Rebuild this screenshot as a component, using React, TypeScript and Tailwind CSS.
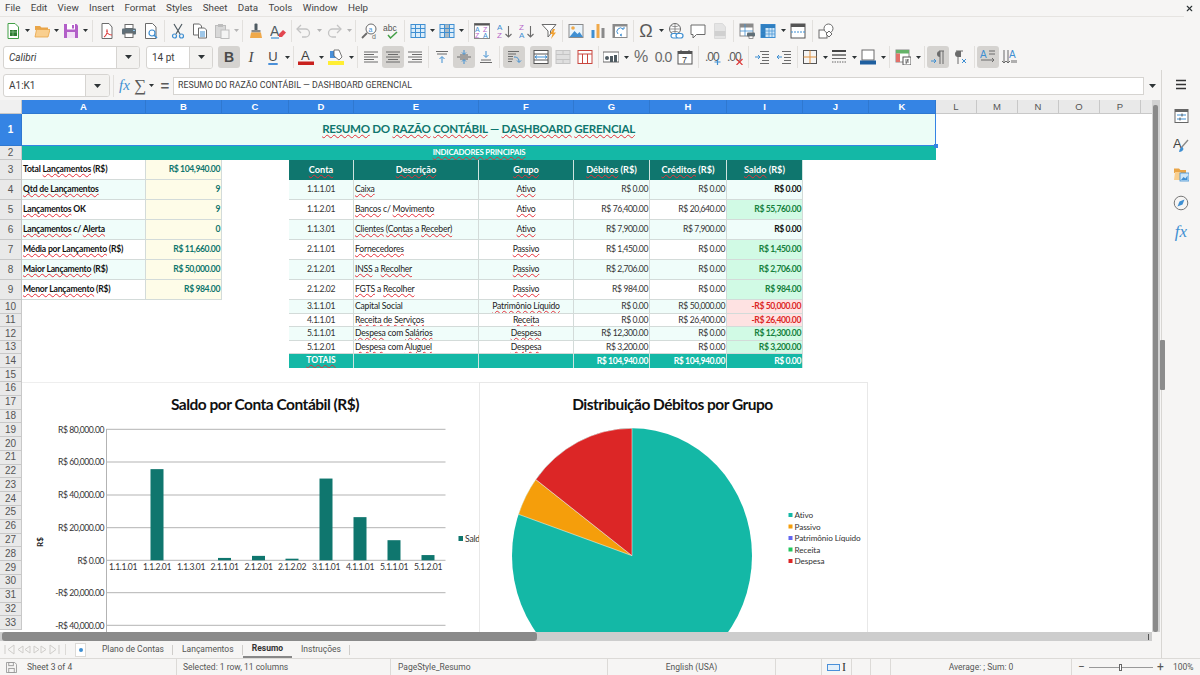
import type { ReactNode } from 'react';
import { Fragment } from 'react';
import { X } from 'lucide-react';

const cols = 'grid grid-cols-[22px_124px_76px_67px_65px_125px_95px_76px_77px_76px_66px_67px_41px_41px_41px_41px_41px_1fr]';
const uiFont = "font-['Roboto',sans-serif]";
const sheetFont = "font-['Lato',sans-serif]";

// text between | marks gets the spellcheck squiggle
function Spell({ text }: { text: string }) {
  return (
    <>
      {text.split('|').map((part, i) =>
        i % 2 === 1 ? (
          <span key={i} className="underline decoration-wavy decoration-[#e5303a] decoration-1 underline-offset-[0.5px]">
            {part}
          </span>
        ) : (
          <Fragment key={i}>{part}</Fragment>
        )
      )}
    </>
  );
}

function T({ children, on, className = '' }: { children: ReactNode; on?: boolean; className?: string }) {
  return (
    <div className={`flex h-[22px] w-[22px] shrink-0 items-center justify-center rounded-[3px] ${on ? 'bg-[#d5d3d0]' : ''} ${className}`}>
      {children}
    </div>
  );
}

function D({ className = 'w-[7px]', dim }: { className?: string; dim?: boolean }) {
  return (
    <div className={`flex shrink-0 items-center justify-center ${className}`}>
      <svg width="5" height="3" viewBox="0 0 5 3">
        <path d="M0 0h5L2.5 3z" fill={dim ? '#b5b5b5' : '#2e3436'} />
      </svg>
    </div>
  );
}

function S({ className = 'w-[5px]' }: { className?: string }) {
  return (
    <div className={`flex h-[22px] shrink-0 justify-center ${className}`}>
      <div className="h-full w-px bg-[#e2e0dd]" />
    </div>
  );
}

function Ic({ children }: { children: ReactNode }) {
  return (
    <svg viewBox="0 0 16 16" className="h-4 w-4" fill="none">
      {children}
    </svg>
  );
}

const grey = '#6b6b6b';
const blue = '#3f8fd2';

const I = {
  newDoc: <Ic><path d="M3 .5h7l3.5 3.5v11.5H3z" fill="#fff" stroke="#43a047" /><rect x="5" y="7" width="7" height="6" fill="#2e7d32" /><path d="M5 9h7M8 7v6" stroke="#a5d6a7" strokeWidth=".6" /></Ic>,
  open: <Ic><path d="M1 13V3h5l1.5 1.5H14V7H1z" fill="#e9a548" /><path d="M1 14 2.5 6.5H16L14 14z" fill="#f9cf8f" stroke="#e9a548" strokeWidth=".8" /></Ic>,
  save: <Ic><path d="M1 1h12.5L15 2.5V15H1z" fill="#b25ec8" /><rect x="4" y="1" width="8" height="5.5" fill="#fff" /><rect x="4" y="9" width="8" height="6" fill="#f2dff6" /><rect x="9" y="2" width="2" height="3.5" fill="#b25ec8" /></Ic>,
  pdf: <Ic><path d="M3 .5h7L13 4v11.5H3z" fill="#fff" stroke={grey} /><path d="M5 14c2-1 4-5 3-7-1 2 1 5 5 5" stroke="#dd3b3b" strokeWidth="1.1" /></Ic>,
  print: <Ic><rect x="4" y="1.5" width="8" height="4" fill="#fff" stroke={grey} /><rect x="1" y="5.5" width="14" height="6" rx="1" fill="#5f6f78" /><rect x="4" y="10" width="8" height="4.5" fill="#fff" stroke={grey} /><rect x="12" y="7" width="2" height="1" fill="#8ec5ea" /></Ic>,
  preview: <Ic><path d="M2.5.5h7L13 4v11.5H2.5z" fill="#fff" stroke={grey} /><circle cx="9" cy="10" r="3" stroke={blue} strokeWidth="1.2" /><path d="m11 12 3 3" stroke={blue} strokeWidth="1.5" /></Ic>,
  cut: <Ic><path d="M4 1l6 10M12 1 6 11" stroke="#4f5b62" strokeWidth="1.2" /><circle cx="4.5" cy="13" r="2" stroke={blue} strokeWidth="1.2" /><circle cx="11.5" cy="13" r="2" stroke={blue} strokeWidth="1.2" /></Ic>,
  copy: <Ic><path d="M1.5 1h6l2 2v9h-8z" fill="#fff" stroke={grey} /><path d="M6.5 5h6l2 2v8h-8z" fill="#fff" stroke={grey} /><path d="M8 9h5M8 11h5M8 13h5" stroke={blue} /></Ic>,
  paste: <Ic><rect x="1.5" y="2.5" width="10" height="12" fill="#d8d8d8" stroke="#bdbdbd" /><rect x="4" y="1" width="5" height="3" fill="#bdbdbd" /><rect x="7" y="7" width="8" height="8.5" fill="#f4f4f4" stroke="#bdbdbd" /></Ic>,
  brush: <Ic><rect x="6.5" y="0.5" width="3" height="7" rx="1" fill="#4f5b62" /><rect x="3.5" y="7" width="9" height="2.5" fill="#8a8a8a" /><path d="M3 9.5h10l1 5.500H2z" fill="#f0a94a" /></Ic>,
  clear: <Ic><text x="0" y="12.5" fontSize="14" fill="#4f5b62" fontFamily="Liberation Sans">A</text><path d="M1 15h8" stroke={blue} strokeWidth="1.2" /><path d="m9 11 4-4 3 2.5-4 4.5H9z" fill="#e2464f" /></Ic>,
  undo: <Ic><path d="M1 6h8.5a4 4 0 0 1 0 8H6" stroke="#c4c4c4" strokeWidth="1.3" /><path d="M5 2 1 6l4 4" stroke="#c4c4c4" strokeWidth="1.3" /></Ic>,
  redo: <Ic><path d="M15 6H6.5a4 4 0 0 0 0 8H10" stroke="#c4c4c4" strokeWidth="1.3" /><path d="m11 2 4 4-4 4" stroke="#c4c4c4" strokeWidth="1.3" /></Ic>,
  find: <Ic><circle cx="10" cy="6" r="5" fill="#fff" stroke={grey} /><path d="m6 10-5 5" stroke={grey} strokeWidth="1.8" /><text x="7.6" y="8.5" fontSize="7" fill={blue} fontFamily="Liberation Sans">a</text><text x="11" y="15.5" fontSize="7" fill={grey} fontFamily="Liberation Sans">d</text></Ic>,
  spell: <Ic><text x="0" y="8" fontSize="8.5" fill="#555" fontFamily="Liberation Sans">abc</text><path d="m5 12 2.5 3L14 9" stroke="#43a047" strokeWidth="1.5" /></Ic>,
  rows: <Ic><rect x="1" y="1.5" width="14" height="13" fill="#dcedf9" stroke={blue} /><path d="M1 5.5h14M1 9.5h14M5.5 1.5v13M10.5 1.5v13" stroke={blue} /></Ic>,
  columns: <Ic><rect x="1" y="1.5" width="14" height="13" fill="#dcedf9" stroke={blue} /><rect x="5.5" y="1.5" width="5" height="13" fill="#a9b9c4" /><path d="M1 5.5h14M1 9.5h14M5.5 1.5v13M10.5 1.5v13" stroke={blue} /></Ic>,
  sortBox: <Ic><rect x=".5" y=".5" width="15" height="15" fill="#fff" stroke="#8a8a8a" /><rect x=".5" y=".5" width="15" height="2" fill="#555" /><text x="1" y="9" fontSize="7" fill={blue} fontFamily="Liberation Sans">A</text><text x="1" y="15" fontSize="7" fill="#b565c8" fontFamily="Liberation Sans">Z</text><text x="9" y="9" fontSize="7" fill="#b565c8" fontFamily="Liberation Sans">Z</text><text x="9" y="15" fontSize="7" fill={blue} fontFamily="Liberation Sans">A</text></Ic>,
  asc: <Ic><text x="0" y="7" fontSize="8" fill={blue} fontFamily="Liberation Sans">A</text><text x="0" y="15" fontSize="8" fill="#b565c8" fontFamily="Liberation Sans">Z</text><path d="M11.5 3v11M8.5 11l3 3 3-3" stroke={grey} strokeWidth="1.1" /></Ic>,
  desc: <Ic><text x="0" y="7" fontSize="8" fill="#b565c8" fontFamily="Liberation Sans">Z</text><text x="0" y="15" fontSize="8" fill={blue} fontFamily="Liberation Sans">A</text><path d="M11.5 3v11M8.5 11l3 3 3-3" stroke={grey} strokeWidth="1.1" /></Ic>,
  filter: <Ic><path d="M1 1.5h14L9.5 8v3L7 14V8z" fill="#fff" stroke={grey} /><path d="M12 6 9 11h2.5L10 16l5-6.5h-2.5L14 6z" fill="#f0a030" /></Ic>,
  image: <Ic><rect x="1" y="1.5" width="14" height="13" fill="#eaf4fb" stroke="#8a8a8a" /><circle cx="5" cy="5" r="1.8" fill="#f0a94a" /><path d="M1.5 14l5-6 3 3 2-2 3.5 5z" fill={blue} /></Ic>,
  chart: <Ic><rect x="1.5" y="7" width="3" height="8" fill={blue} /><rect x="6.5" y="1" width="3" height="14" fill="#f0a94a" /><rect x="11.5" y="5" width="3" height="10" fill="#8a8a8a" /></Ic>,
  pivot: <Ic><rect x="1" y="1.5" width="14" height="13" fill="#fff" stroke="#8a8a8a" /><rect x="1" y="1.5" width="14" height="2" fill="#8a8a8a" /><rect x="1" y="1.5" width="2" height="13" fill="#8a8a8a" /><path d="M6 11a3.5 3.5 0 0 1 5-5M12 6v-2M12 6h-2M10 13l-2-1 2-1" stroke={blue} /></Ic>,
  link: <Ic><circle cx="7" cy="6" r="5.5" fill="#fff" stroke={grey} /><path d="M1.5 6h11M7 .5v11M3 2.5c2 1.5 6 1.5 8 0M3 9.5c2-1.5 6-1.5 8 0" stroke={grey} strokeWidth=".7" /><rect x="3" y="10.5" width="7" height="4.5" rx="2.2" fill="#fff" stroke={blue} strokeWidth="1.2" /><rect x="8" y="10.5" width="7" height="4.5" rx="2.2" fill="#fff" stroke={blue} strokeWidth="1.2" /></Ic>,
  comment: <Ic><path d="M1 2h14v9.5H6.5L3 15v-3.5H1z" fill="#fff" stroke={grey} /></Ic>,
  headers: <Ic><path d="M2.5.5h8L13.5 4v11.5h-11z" fill="#e4e4e4" stroke="#dadada" /><rect x="2.5" y="8" width="11" height="5" fill="#d0d0d0" /></Ic>,
  hfPrint: <Ic><rect x="1" y="1" width="13" height="12" fill="#fff" stroke="#8a8a8a" /><rect x="1" y="1" width="13" height="3.5" fill="#8a8a8a" /><path d="M1 8h13M6 1v12" stroke={blue} strokeWidth=".8" /><rect x="8" y="9.5" width="8" height="4" rx="1" fill="#5f6f78" /><rect x="10" y="13" width="4" height="2.5" fill="#fff" stroke={grey} strokeWidth=".7" /></Ic>,
  freeze: <Ic><rect x="1" y="1.5" width="14" height="13" fill="#cfe6f7" stroke={blue} /><rect x="1" y="1.5" width="4.5" height="13" fill="#2f7fc1" /><rect x="1" y="1.5" width="14" height="3.5" fill="#2f7fc1" /><path d="M1 8h14M1 11h14M9 5v10M12 5v10" stroke={blue} strokeWidth=".7" /></Ic>,
  split: <Ic><rect x="1" y="1" width="14" height="14" fill="#fff" stroke="#555" /><rect x="1" y="1" width="14" height="3" fill="#555" /><path d="M1 9h14" stroke={blue} strokeDasharray="2 1" /></Ic>,
  shapes: <Ic><rect x="1" y="7" width="8" height="8" fill="#fff" stroke={grey} /><circle cx="10.5" cy="5.5" r="4.5" fill="#fff" stroke={grey} /><path d="M8 11l3-3 3 3-3 3z" fill="#fff" stroke={grey} /></Ic>,
};

const Lines = ({ pattern }: { pattern: 'left' | 'center' | 'right' }) => {
  const rows = [14, 10, 14, 10, 14];
  return (
    <Ic>
      {rows.map((len, i) => {
        const x = pattern === 'left' ? 1 : pattern === 'center' ? 8 - len / 2 : 15 - len;
        return <path key={i} d={`M${x} ${3 + i * 2.5}h${len}`} stroke={grey} />;
      })}
    </Ic>
  );
};

function Toolbar1() {
  return (
    <div className="flex h-[27px] items-center pl-[2px]">
      <T>{I.newDoc}</T><D />
      <T>{I.open}</T><D />
      <T>{I.save}</T><D />
      <S className="w-[7px]" />
      <T>{I.pdf}</T><T>{I.print}</T><T>{I.preview}</T>
      <S />
      <T>{I.cut}</T><T>{I.copy}</T><T>{I.paste}</T><D dim />
      <S />
      <T>{I.brush}</T><T>{I.clear}</T>
      <S className="w-[4px]" />
      <T>{I.undo}</T><D className="w-[8px]" dim />
      <T>{I.redo}</T><D className="w-[8px]" dim />
      <S />
      <T>{I.find}</T><T>{I.spell}</T>
      <S />
      <T>{I.rows}</T><D />
      <T>{I.columns}</T><D />
      <S className="w-[6px]" />
      <T>{I.sortBox}</T>
      <T className="ml-px">{I.asc}</T><T>{I.desc}</T><T>{I.filter}</T>
      <S />
      <T>{I.image}</T><T>{I.chart}</T><T>{I.pivot}</T>
      <S className="w-[4px]" />
      <T><span className="font-['Liberation_Sans',sans-serif] text-[18px] leading-none text-[#5a5a5a]">Ω</span></T><D className="w-[8px]" />
      <T>{I.link}</T><T>{I.comment}</T><T>{I.headers}</T>
      <S />
      <T>{I.hfPrint}</T><T className="-ml-px">{I.freeze}</T><D className="w-[8px]" />
      <T>{I.split}</T>
      <S className="w-[6px]" />
      <T>{I.shapes}</T>
    </div>
  );
}

function Combo({ text, className, arrow, italic }: { text: string; className: string; arrow: string; italic?: boolean }) {
  return (
    <div className={`flex h-[23px] shrink-0 overflow-hidden rounded-[3px] border border-[#d6d4d1] bg-white ${className}`}>
      <div className={`flex flex-1 items-center pl-[5px] text-[10px] text-[#3d3d3d] ${italic ? 'italic' : ''}`}>{text}</div>
      <div className={`flex items-center justify-center border-l border-[#d6d4d1] bg-[#f3f2f0] ${arrow}`}>
        <svg width="7" height="4" viewBox="0 0 7 4"><path d="M0 0h7L3.5 4z" fill="#2e3436" /></svg>
      </div>
    </div>
  );
}

function Toolbar2() {
  return (
    <div className="flex h-[26px] items-center pl-[3px]">
      <Combo text="Calibri" italic className="w-[137px]" arrow="w-[23px]" />
      <Combo text="14 pt" className="ml-[6px] w-[67px]" arrow="w-[23px]" />
      <T on className="ml-[5px]"><span className="font-['Liberation_Sans',sans-serif] text-[14px] font-bold text-[#4a4a4a]">B</span></T>
      <T><span className="font-['Liberation_Serif',serif] text-[15px] italic text-[#4a4a4a]">I</span></T>
      <T><span className="font-['Liberation_Sans',sans-serif] text-[13px] text-[#4a4a4a] underline decoration-[#4a90d9] decoration-2 underline-offset-2">U</span></T><D />
      <S className="w-[4px]" />
      <T>
        <Ic><text x="3" y="11" fontSize="13" fill="#3d3d3d" fontFamily="Liberation Sans">A</text><rect x="0" y="12.5" width="16" height="3.5" fill="#c9211e" /></Ic>
      </T><D className="w-[8px]" />
      <T>
        <Ic><rect x="2" y="2" width="6" height="7" fill="#4a90d9" /><path d="M6 1h5l3 7-3 3-5-4z" fill="#fff" stroke="#555" strokeWidth=".8" /><rect x="0" y="12" width="16" height="4" fill="#ffee33" /></Ic>
      </T><D className="w-[8px]" />
      <S />
      <T><Lines pattern="left" /></T>
      <T on><Lines pattern="center" /></T>
      <T><Lines pattern="right" /></T>
      <S />
      <T><Ic><path d="M2 2.5h12M3 5h10" stroke={grey} /><path d="M8 14V8M5.5 10 8 7.5l2.5 2.5" stroke={blue} /></Ic></T>
      <T on><Ic><path d="M1 8h14" stroke={grey} /><path d="M4 6h8M4 10h8" stroke={grey} /><path d="M8 1v4M6 3.5 8 5.5l2-2M8 15v-4M6 12.5 8 10.5l2 2" stroke={blue} /></Ic></T>
      <T><Ic><path d="M3 11h10M2 13.5h12" stroke={grey} /><path d="M8 2v6M5.5 6 8 8.5 10.5 6" stroke={blue} /></Ic></T>
      <S />
      <T on className="ml-px"><Ic><path d="M2 2.5h11M2 5h8M2 7.5h5M2 10h5M2 12.5h4" stroke={grey} /><path d="M8 8c4 0 5 2 5 5M11 11.5l2 2 2-2" stroke={blue} /></Ic></T>
      <T on className="ml-[5px]"><Ic><rect x="1" y="1.5" width="14" height="13" fill="#fff" stroke="#555" /><path d="M1 5h14M1 11h14" stroke="#555" /><path d="M2 8h12M4 6.5 2 8l2 1.5M12 6.5 14 8l-2 1.5" stroke={blue} /></Ic></T>
      <T><Ic><rect x="1" y="1.5" width="14" height="13" fill="#dfdfdf" stroke="#c4c4c4" /><path d="M1 5.5h14M1 10.5h14M8 1.5v4M8 10.5v4" stroke="#c4c4c4" /></Ic></T>
      <T><Ic><rect x="1" y="1.5" width="14" height="13" fill="#fff" stroke="#c9473f" /><path d="M1 5h14M5.5 5v9.5M10.5 5v9.5" stroke="#c9473f" /></Ic></T>
      <S className="w-[4px]" />
      <T><Ic><rect x="0" y="3" width="16" height="10" fill="#fff" stroke={grey} /><rect x="7" y="7" width="3" height="6" fill="#4f5b62" /><rect x="11" y="6" width="3" height="7" fill="#4f5b62" /><circle cx="4" cy="9" r="2" fill="#4f5b62" /></Ic></T><D className="w-[8px]" />
      <T><span className="font-['Liberation_Sans',sans-serif] text-[16px] leading-none text-[#6a6a6a]">%</span></T>
      <T><span className="font-['Liberation_Sans',sans-serif] text-[14px] leading-none tracking-[-1px] text-[#6a6a6a]">0.0</span></T>
      <T><Ic><rect x="1" y="2.5" width="14" height="12.5" fill="#fff" stroke="#555" /><rect x="1" y="2.5" width="14" height="2.5" fill="#555" /><path d="M4 1v3M12 1v3" stroke="#555" /><text x="5" y="13.5" fontSize="9" fill="#333" fontFamily="Liberation Sans">7</text></Ic></T>
      <S />
      <T className="ml-px"><Ic><text x="0" y="12" fontSize="12" fill="#5a5a5a" letterSpacing="-1" fontFamily="Liberation Sans">.00</text><path d="M12.5 10v6M9.5 13h6" stroke={blue} strokeWidth="1.2" /></Ic></T>
      <T><Ic><text x="0" y="12" fontSize="12" fill="#5a5a5a" letterSpacing="-1" fontFamily="Liberation Sans">.00</text><path d="m9.5 10 6 6M15.5 10l-6 6" stroke="#dd3b3b" strokeWidth="1.2" /></Ic></T>
      <S />
      <T><Ic><path d="M6 2.5h9M8 5.5h7M8 8.5h7M8 11.5h7M6 14.5h9" stroke={grey} /><path d="M1 8h5M4 6l2 2-2 2" stroke={blue} /></Ic></T>
      <T><Ic><path d="M6 2.5h9M8 5.5h7M8 8.5h7M8 11.5h7M6 14.5h9" stroke={grey} /><path d="M6 8H1M3 6 1 8l2 2" stroke={blue} /></Ic></T>
      <S className="w-[4px]" />
      <T><Ic><rect x="1.5" y="1.5" width="13" height="13" stroke="#555" /><path d="M8 1.5v13M1.5 8h13" stroke="#e0913d" /></Ic></T><D className="w-[8px]" />
      <T className="-ml-px"><Ic><path d="M1 2h14" stroke="#444" strokeWidth="2" /><path d="M1 6h14" stroke="#444" strokeWidth="1.3" /><path d="M1 9.5h14" stroke="#666" /><path d="M1 13h14" stroke="#666" strokeDasharray="1.5 1" /></Ic></T><D className="w-[8px]" />
      <T className="-ml-px"><Ic><rect x="2" y="1" width="12" height="10" fill="#fff" stroke={grey} /><rect x="0" y="11.5" width="16" height="4" fill="#1f5f9f" /></Ic></T><D className="w-[8px]" />
      <S />
      <T><Ic><rect x="1" y="1" width="13" height="12" fill="#fff" stroke="#8a8a8a" /><rect x="1" y="1" width="13" height="3.5" fill="#66b36a" /><rect x="1" y="4.5" width="4" height="8.5" fill="#e2716a" /><rect x="8" y="8" width="8" height="8" fill="#fff" stroke="#555" /><path d="M10 11h4M10 13h4M13 10l-2 5" stroke="#555" strokeWidth=".8" /></Ic></T><D className="w-[8px]" />
      <S />
      <T on><Ic><path d="M9 2h5M10 2v13M13 2v13" stroke={grey} /><path d="M10 2a3 3 0 0 0 0 6" fill={grey} /><path d="M1 12h5M4 10l2 2-2 2" stroke={blue} /></Ic></T>
      <T><Ic><path d="M4 2h7M6 2v13" stroke={grey} /><path d="M6 2a3 3 0 0 0 0 6h3V2" fill={grey} /><path d="m10 10 4 4M14 10l-4 4" stroke={blue} /></Ic></T>
      <S className="w-[6px]" />
      <T on><Ic><text x="0" y="9" fontSize="10" fill={blue} fontFamily="Liberation Sans">A</text><path d="M1 11h13M12 9l2 2-2 2M9 2h6M9 5h6" stroke={grey} /></Ic></T>
      <T><Ic><text x="7" y="9" fontSize="10" fill={blue} fontFamily="Liberation Sans">A</text><path d="M2 1v13M6 1v13M0 12l2 2 2-2M4 12l2 2 2-2M10 11v3M12 11v3M14 11v3" stroke={grey} /></Ic></T>
    </div>
  );
}

function FormulaBar() {
  return (
    <div className="flex h-[30px] items-center pt-[1px] pl-[3px]">
      <Combo text="A1:K1" className="w-[107px]" arrow="w-[24px]" />
      <div className="ml-[3px] h-[22px] w-px bg-[#e2e0dd]" />
      <span className="ml-[5px] w-[14px] font-['Liberation_Serif',serif] text-[15px] italic leading-none text-[#3f8fd2]">fx</span>
      <span className="w-[14px] text-center font-['Liberation_Serif',serif] text-[17px] leading-none text-[#5a5a5a]">∑</span>
      <D className="w-[9px]" />
      <span className="ml-[3px] w-[12px] text-center font-['Liberation_Sans',sans-serif] text-[15px] leading-none font-bold text-[#5a5a5a]">=</span>
      <div className="ml-[2px] flex h-[18px] w-[971px] items-center border border-[#d6d4d1] bg-white pl-[4px] text-[8.800px] text-[#3d3d3d]">
        RESUMO DO RAZÃO CONTÁBIL — DASHBOARD GERENCIAL
      </div>
      <div className="flex w-[16px] justify-center">
        <svg width="7" height="4" viewBox="0 0 7 4"><path d="M0 0h7L3.5 4z" fill="#2e3436" /></svg>
      </div>
    </div>
  );
}

const accounts = [
  { h: 'h-[20px]', c: '1.1.1.01', d: '|Caixa|', g: '|Ativo|', db: 'R$ 0.00', cr: 'R$ 0.00', s: 'R$ 0.00', k: 'zero' },
  { h: 'h-[20px]', c: '1.1.2.01', d: '|Bancos| c/ |Movimento|', g: '|Ativo|', db: 'R$ 76,400.00', cr: 'R$ 20,640.00', s: 'R$ 55,760.00', k: 'pos' },
  { h: 'h-[20px]', c: '1.1.3.01', d: '|Clientes| |(Contas| a |Receber)|', g: '|Ativo|', db: 'R$ 7,900.00', cr: 'R$ 7,900.00', s: 'R$ 0.00', k: 'zero' },
  { h: 'h-[20px]', c: '2.1.1.01', d: '|Fornecedores|', g: '|Passivo|', db: 'R$ 1,450.00', cr: 'R$ 0.00', s: 'R$ 1,450.00', k: 'pos' },
  { h: 'h-[20px]', c: '2.1.2.01', d: '|INSS| a |Recolher|', g: '|Passivo|', db: 'R$ 2,706.00', cr: 'R$ 0.00', s: 'R$ 2,706.00', k: 'pos' },
  { h: 'h-[20px]', c: '2.1.2.02', d: '|FGTS| a |Recolher|', g: '|Passivo|', db: 'R$ 984.00', cr: 'R$ 0.00', s: 'R$ 984.00', k: 'pos' },
  { h: 'h-[14px]', c: '3.1.1.01', d: 'Capital Social', g: '|Patrimônio Líquido|', db: 'R$ 0.00', cr: 'R$ 50,000.00', s: '-R$ 50,000.00', k: 'neg' },
  { h: 'h-[13px]', c: '4.1.1.01', d: '|Receita de Serviços|', g: '|Receita|', db: 'R$ 0.00', cr: 'R$ 26,400.00', s: '-R$ 26,400.00', k: 'neg' },
  { h: 'h-[14px]', c: '5.1.1.01', d: '|Despesa| com |Salários|', g: '|Despesa|', db: 'R$ 12,300.00', cr: 'R$ 0.00', s: 'R$ 12,300.00', k: 'pos' },
  { h: 'h-[13px]', c: '5.1.2.01', d: '|Despesa| com |Aluguel|', g: '|Despesa|', db: 'R$ 3,200.00', cr: 'R$ 0.00', s: 'R$ 3,200.00', k: 'pos' },
];

const kpis = [
  ['Total |Lançamentos| (R$)', 'R$ 104,940.00'],
  ['|Qtd de Lançamentos|', '9'],
  ['|Lançamentos| OK', '9'],
  ['|Lançamentos| c/ |Alerta|', '0'],
  ['|Média por Lançamento| (R$)', 'R$ 11,660.00'],
  ['|Maior Lançamento| (R$)', 'R$ 50,000.00'],
  ['|Menor Lançamento| (R$)', 'R$ 984.00'],
];

const cell = 'flex min-w-0 items-center overflow-hidden whitespace-nowrap border-r border-b border-[#d3dbd9] text-[8.600px] leading-none';

function RowHead({ n, active }: { n: number; active?: boolean }) {
  return (
    <div
      className={`flex items-center justify-center border-r border-b font-['Liberation_Sans',sans-serif] text-[10px] leading-none ${
        active ? 'border-[#2f78d0] bg-[#3584e4] font-bold text-white' : 'border-[#c8c8c8] bg-[#e9e9e9] text-[#555]'
      }`}
    >
      {n}
    </div>
  );
}

function KpiCells({ i }: { i: number }) {
  const k = kpis[i];
  if (!k) return <><div /><div /></>;
  return (
    <>
      <div className={`${cell} pl-[1px] font-bold tracking-[-0.2px] text-[#111] ${i % 2 === 1 ? 'bg-[#f0fdfa]' : 'bg-white'}`}>
        <span><Spell text={k[0]} /></span>
      </div>
      <div className={`${cell} justify-end bg-[#fefce8] pr-[1px] font-bold tracking-[-0.4px] text-[#0f766e]`}>{k[1]}</div>
    </>
  );
}

function Sheet() {
  const letters = ['A', 'B', 'C', 'D', 'E', 'F', 'G', 'H', 'I', 'J', 'K'];
  const rest = ['L', 'M', 'N', 'O', 'P'];
  const lower = Array.from({ length: 19 }, (_, i) => i + 15);
  const head = ['|Conta|', '|Descrição|', '|Grupo|', '|Débitos| (R$)', '|Créditos| (R$)', '|Saldo| (R$)'];

  return (
    <div className={`relative h-[532px] flex-1 overflow-hidden bg-white ${sheetFont}`}>
      <div className={`${cols} h-[14px] font-['Liberation_Sans',sans-serif] text-[9.500px] leading-none`}>
        <div className="border-r border-b border-[#c8c8c8] bg-[#f0f0f0]" />
        {letters.map((l) => (
          <div key={l} className="flex items-center justify-center border-r border-b border-[#2f78d0] bg-[#3584e4] font-bold text-white">{l}</div>
        ))}
        {rest.map((l) => (
          <div key={l} className="flex items-center justify-center border-r border-b border-[#c8c8c8] bg-[#e9e9e9] text-[#555]">{l}</div>
        ))}
        <div className="border-b border-[#c8c8c8] bg-[#e9e9e9]" />
      </div>

      <div className={`${cols} h-[32px]`}>
        <RowHead n={1} active />
        <div className="col-span-11 flex items-center justify-center border-r border-b border-[#3584e4] bg-[#ecfdf7] pb-[2px] text-[11.600px] font-bold tracking-[-0.3px] text-[#0f766e]">
          <span><Spell text="|RESUMO| DO |RAZÃO| |CONTÁBIL| — |DASHBOARD| |GERENCIAL|" /></span>
        </div>
      </div>
      <div className={`${cols} h-[14px]`}>
        <RowHead n={2} />
        <div className="col-span-11 flex items-center justify-center overflow-hidden bg-[#14b8a6] text-[7.800px] font-bold tracking-[-0.2px] text-white">
          <span><Spell text="|INDICADORES| |PRINCIPAIS|" /></span>
        </div>
      </div>

      <div className={`${cols} h-[20px]`}>
        <RowHead n={3} />
        <KpiCells i={0} />
        <div />
        {head.map((h) => (
          <div key={h} className="flex items-center justify-center border-r border-[#cfe3df] bg-[#0f766e] text-[9.200px] font-bold text-white">
            <span><Spell text={h} /></span>
          </div>
        ))}
      </div>

      {accounts.map((a, i) => (
        <div key={a.c} className={`${cols} ${a.h}`}>
          <RowHead n={i + 4} />
          <KpiCells i={i + 1} />
          <div />
          <div className={`${cell} justify-center tracking-[-0.35px] text-[#333] ${i % 2 === 0 ? 'bg-[#f0fdfa]' : 'bg-white'}`}>{a.c}</div>
          <div className={`${cell} pl-[1px] tracking-[-0.2px] text-[#222] ${i % 2 === 0 ? 'bg-[#f0fdfa]' : 'bg-white'}`}><span><Spell text={a.d} /></span></div>
          <div className={`${cell} justify-center tracking-[-0.2px] text-[#222] ${i % 2 === 0 ? 'bg-[#f0fdfa]' : 'bg-white'}`}><span><Spell text={a.g} /></span></div>
          <div className={`${cell} justify-end pr-[1px] tracking-[-0.4px] text-[#333] ${i % 2 === 0 ? 'bg-[#f0fdfa]' : 'bg-white'}`}>{a.db}</div>
          <div className={`${cell} justify-end pr-[1px] tracking-[-0.4px] text-[#333] ${i % 2 === 0 ? 'bg-[#f0fdfa]' : 'bg-white'}`}>{a.cr}</div>
          <div
            className={`${cell} justify-end pr-[1px] font-bold tracking-[-0.4px] ${
              a.k === 'pos'
                ? 'bg-[#d1fae5] text-[#15803d]'
                : a.k === 'neg'
                  ? 'bg-[#fee2e2] text-[#dc2626]'
                  : `text-[#111] ${i % 2 === 0 ? 'bg-[#f0fdfa]' : 'bg-white'}`
            }`}
          >
            {a.s}
          </div>
        </div>
      ))}

      <div className={`${cols} h-[14px]`}>
        <RowHead n={14} />
        <div /><div /><div />
        {['|TOTAIS|', '', '', 'R$ 104,940.00', 'R$ 104,940.00', 'R$ 0.00'].map((t, i) => (
          <div
            key={i}
            className={`flex items-center overflow-hidden border-r border-[#cfe3df] bg-[#14b8a6] leading-none font-bold text-white ${
              i === 0 ? 'justify-center pb-[2px] text-[8.600px]' : 'justify-end pr-[1px] text-[8.600px] tracking-[-0.4px]'
            }`}
          >
            <span><Spell text={t} /></span>
          </div>
        ))}
      </div>

      {lower.map((n) => (
        <div key={n} className={`${cols} ${n === 15 ? 'h-[14px]' : 'h-[13.790px]'}`}>
          <RowHead n={n} />
        </div>
      ))}

      {/* selection handle */}
      <div className="absolute top-[44px] left-[934px] h-[4px] w-[4px] bg-[#3584e4]" />

      {/* charts float over the cells */}
      <div className="absolute top-[282px] left-[22px] flex">
        <BarChart />
        <PieChart />
      </div>
    </div>
  );
}

const bars = [
  { l: '1.1.1.01', x: 123, v: 0 },
  { l: '1.1.2.01', x: 157, v: 55760 },
  { l: '1.1.3.01', x: 191, v: 0 },
  { l: '2.1.1.01', x: 224.5, v: 1450 },
  { l: '2.1.2.01', x: 258.5, v: 2706 },
  { l: '2.1.2.02', x: 292, v: 984 },
  { l: '3.1.1.01', x: 326, v: 50000 },
  { l: '4.1.1.01', x: 360, v: 26400 },
  { l: '5.1.1.01', x: 394, v: 12300 },
  { l: '5.1.2.01', x: 428, v: 3200 },
];
const ticks = [
  ['R$ 80,000.00', 429.3],
  ['R$ 60,000.00', 462],
  ['R$ 40,000.00', 495],
  ['R$ 20,000.00', 527.7],
  ['R$ 0.00', 560.3],
  ['-R$ 20,000.00', 592.7],
  ['-R$ 40,000.00', 625.3],
] as const;

function BarChart() {
  return (
    <svg viewBox="22 382 457 252" className="h-[252px] w-[457px] bg-white" fontFamily="Lato, sans-serif">
      <path d="M22 382.5H479" stroke="#eeeeee" />
      <text x="265" y="409.5" textAnchor="middle" fontSize="15.5" fontWeight="700" letterSpacing="-0.5" fill="#111">Saldo por Conta Contábil (R$)</text>
      {ticks.map(([l, y]) => (
        <g key={l}>
          <path d={`M106 ${y}H445.5`} stroke="#b3b3b3" strokeWidth="1" />
          <text x="104" y={y + 3.2} textAnchor="end" fontSize="8.6" letterSpacing="-0.45" fill="#333">{l}</text>
        </g>
      ))}
      <path d="M106.5 429V634" stroke="#b3b3b3" />
      {bars.map((b) => {
        const h = b.v * 0.001635;
        return (
          <g key={b.l}>
            <rect x={b.x - 6.5} y={560.3 - h} width="13" height={h} fill="#0f766e" />
            <text x={b.x} y="570" textAnchor="middle" fontSize="8.6" letterSpacing="-0.35" fill="#333">{b.l}</text>
          </g>
        );
      })}
      <text transform="translate(43 547) rotate(-90)" fontSize="8" fontWeight="700" fill="#222">R$</text>
      <rect x="458.5" y="536" width="4.5" height="5" fill="#0f766e" />
      <text x="465" y="541.5" fontSize="8.6" letterSpacing="-0.2" fill="#333">Saldo</text>
    </svg>
  );
}

function PieChart() {
  const legend = [
    ['Ativo', '#14b8a6', 515],
    ['Passivo', '#f59e0b', 526.5],
    ['Patrimônio Líquido', '#6366f1', 538],
    ['Receita', '#22c55e', 549.5],
    ['Despesa', '#dc2626', 561],
  ] as const;
  return (
    <svg viewBox="479 382 389 252" className="h-[252px] w-[389px] bg-white" fontFamily="Lato, sans-serif">
      <path d="M479.5 382V634M867.5 382V634M479 382.5H868" stroke="#e8e8e8" />
      <text x="672.5" y="409.5" textAnchor="middle" fontSize="15.5" fontWeight="700" letterSpacing="-0.5" fill="#111">Distribuição Débitos por Grupo</text>
      <ellipse cx="632" cy="555.7" rx="120" ry="127.4" fill="#14b8a6" />
      <path d="M632 555.7 518.5 514.3A120 127.4 0 0 1 535.8 479.5Z" fill="#f59e0b" stroke="#fff" strokeWidth=".5" />
      <path d="M632 555.7 535.8 479.5A120 127.4 0 0 1 632 428.3Z" fill="#dc2626" stroke="#fff" strokeWidth=".5" />
      {legend.map(([l, c, y]) => (
        <g key={l}>
          <rect x="788.5" y={y - 2} width="4" height="4" fill={c} />
          <text x="794.5" y={y + 3} fontSize="8.2" letterSpacing="-0.1" fill="#333">{l}</text>
        </g>
      ))}
    </svg>
  );
}

function TabBar() {
  return (
    <div className="flex h-[17px] items-center text-[8.500px] text-[#555]">
      <div className="flex w-[66px] items-center justify-center border-r border-[#dcdad7] pr-[2px]">
        <svg width="56" height="11" viewBox="0 0 56 11" fill="none" stroke="#cfcdca">
          <path d="M1 1v9M10 1 4 5.500l6 4.500zM19 2l-5 3.500 5 3.500zM26 2l-5 3.500 5 3.500zM30 2l5 3.500-5 3.500zM37 2l5 3.500-5 3.500zM46 1l6 4.500-6 4.500zM55 1v9" />
        </svg>
      </div>
      <div className="ml-[9px] flex h-[14px] w-[11px] items-center justify-center border border-[#dcdad7] bg-white">
        <div className="h-[4px] w-[4px] rounded-full bg-[#3f8fd2]" />
      </div>
      <span className="ml-[16px] w-[59px] whitespace-nowrap">Plano de Contas</span>
      <div className="ml-[11px] h-[10px] w-px bg-[#cfcdca]" />
      <span className="ml-[9px] w-[50px] whitespace-nowrap">Lançamentos</span>
      <div className="ml-[10px] h-[10px] w-px bg-[#cfcdca]" />
      <div className="flex h-[17px] w-[49px] items-center justify-center border-b-2 border-[#888] font-bold text-[#333]">Resumo</div>
      <span className="ml-[9px] w-[39px]">Instruções</span>
      <div className="ml-[9px] h-[10px] w-px bg-[#cfcdca]" />
    </div>
  );
}

function StatusBar() {
  return (
    <div className="flex h-[17px] items-center border-t border-[#dcdad7] text-[8.500px] text-[#555]">
      <div className="flex w-[176px] items-center pl-[6px]">
        <svg viewBox="0 0 12 12" className="h-[11px] w-[11px]" fill="none"><path d="M.5.5h9l2 2v9H.5z" stroke="#9a9a9a" /><rect x="3" y=".5" width="5" height="3.5" stroke="#9a9a9a" /><rect x="3" y="7" width="6" height="4.5" stroke="#9a9a9a" /></svg>
        <span className="ml-[10px]">Sheet 3 of 4</span>
      </div>
      <div className="h-full w-[214px] border-l border-[#dcdad7] pl-[6px] leading-[16px]">Selected: 1 row, 11 columns</div>
      <div className="h-full w-[217px] border-l border-[#dcdad7] pl-[7px] leading-[16px]">PageStyle_Resumo</div>
      <div className="h-full w-[168px] border-l border-[#dcdad7] text-center leading-[16px]">English (USA)</div>
      <div className="h-full w-[46px] border-l border-[#dcdad7]" />
      <div className="flex h-full w-[30px] items-center gap-[2px] border-l border-[#dcdad7] pl-[5px]">
        <div className="h-[7px] w-[13px] shrink-0 border border-[#4a90d9] bg-[#e4f0fa]" />
        <span className="font-['Liberation_Serif',serif] text-[12px] leading-none text-[#333]">I</span>
      </div>
      <div className="h-full w-[19px] border-l border-[#dcdad7]" />
      <div className="h-full w-[20px] border-l border-[#dcdad7]" />
      <div className="h-full w-[181px] border-l border-[#dcdad7] text-center leading-[16px]">Average: ; Sum: 0</div>
      <div className="flex h-full flex-1 items-center border-l border-[#dcdad7] pl-[5px]">
        <span className="w-[9px] text-center text-[12px] leading-none">−</span>
        <div className="relative ml-[3px] h-px w-[64px] bg-[#999]">
          <div className="absolute -top-[3px] left-[30px] h-[7px] w-[3px] border border-[#666] bg-white" />
        </div>
        <span className="ml-[3px] w-[9px] text-center text-[12px] leading-none">+</span>
        <span className="ml-[8px]">100%</span>
      </div>
    </div>
  );
}

function Sidebar() {
  return (
    <div className="relative flex w-[38px] shrink-0 flex-col items-center">
      <div className="flex h-[28px] items-center">
        <svg width="12" height="11" viewBox="0 0 12 11"><path d="M1 1.5h10M1 5.5h10M1 9.5h10" stroke="#333" strokeWidth="1.3" /></svg>
      </div>
      <div className="mt-[3px] flex h-[29px] items-center">
        <Ic><rect x="2" y="1.5" width="13" height="13" fill="#fff" stroke="#666" /><rect x="2" y="1.5" width="13" height="2.5" fill="#666" /><path d="M4 7h9M4 11h9" stroke={blue} /><path d="M9 5.5v3M7 9.5v3" stroke="#555" /></Ic>
      </div>
      <div className="flex h-[29px] items-center">
        <Ic><text x="0" y="11" fontSize="13" fill="#444" fontFamily="Liberation Sans">A</text><path d="M15 3 8 11" stroke="#888" strokeWidth="1.3" /><path d="M9.5 10c-2 0-3 2-3.5 5 2 0 4-1 4.5-3z" fill={blue} /></Ic>
      </div>
      <div className="flex h-[29px] items-center">
        <Ic><path d="M1 14V2.5h5L7.5 4H13v3H1z" fill="#e9a548" /><path d="M1 14 2 6h6v8z" fill="#f9cf8f" /><rect x="7" y="7" width="9" height="8" fill="#cfe6f7" stroke={blue} strokeWidth=".8" /><path d="M8 14l2.5-3 2 1.5 2-3V14z" fill={blue} /></Ic>
      </div>
      <div className="flex h-[29px] items-center">
        <Ic><circle cx="8" cy="8" r="6.8" stroke="#777" /><path d="M11.5 4.5 9.5 9.5l-5 2 2-5z" fill={blue} /></Ic>
      </div>
      <div className="flex h-[29px] items-center font-['Liberation_Serif',serif] text-[17px] italic leading-none text-[#3f8fd2]">fx</div>
      <div className="absolute top-[270px] -left-[2px] h-[50px] w-[5px] rounded-[1px] bg-[#8c8c8c]" />
    </div>
  );
}

export default function App() {
  const menus = ['File', 'Edit', 'View', 'Insert', 'Format', 'Styles', 'Sheet', 'Data', 'Tools', 'Window', 'Help'];
  return (
    <div className={`flex h-[675px] w-[1200px] flex-col overflow-hidden bg-[#f6f5f4] ${uiFont}`}>
      <div className="flex h-[17px] w-[1184px] items-center gap-[10.300px] border-b border-[#e6e4e1] pl-[5px] text-[9.800px] text-[#444]">
        {menus.map((m) => (
          <span key={m}>{m}</span>
        ))}
      </div>
      <X className="absolute top-[4px] left-[1185px] h-[9px] w-[9px] text-[#2e3436]" strokeWidth={3} />
      <Toolbar1 />
      <Toolbar2 />
      <div className="flex h-[588px]">
        <div className="flex w-[1162px] shrink-0 flex-col border-r border-[#d8d6d3]">
          <FormulaBar />
          <div className="flex">
            <Sheet />
            <div className="relative h-[532px] w-[9px] border-r border-[#f6f5f4] bg-[#d2d2d2]">
              <div className="absolute top-[5px] left-[1px] h-[527px] w-[5px] rounded-[2px] bg-[#8a8a8a]" />
            </div>
          </div>
          <div className="flex h-[9px] w-[1152px] items-center justify-between bg-[#cdcdcd] pr-[3px] pl-[2px]">
            <div className="h-full w-[535px] rounded-[3px] bg-[#8a8a8a]" />
            <div className="h-[6px] w-px bg-[#555]" />
          </div>
          <TabBar />
        </div>
        <Sidebar />
      </div>
      <StatusBar />
    </div>
  );
}
